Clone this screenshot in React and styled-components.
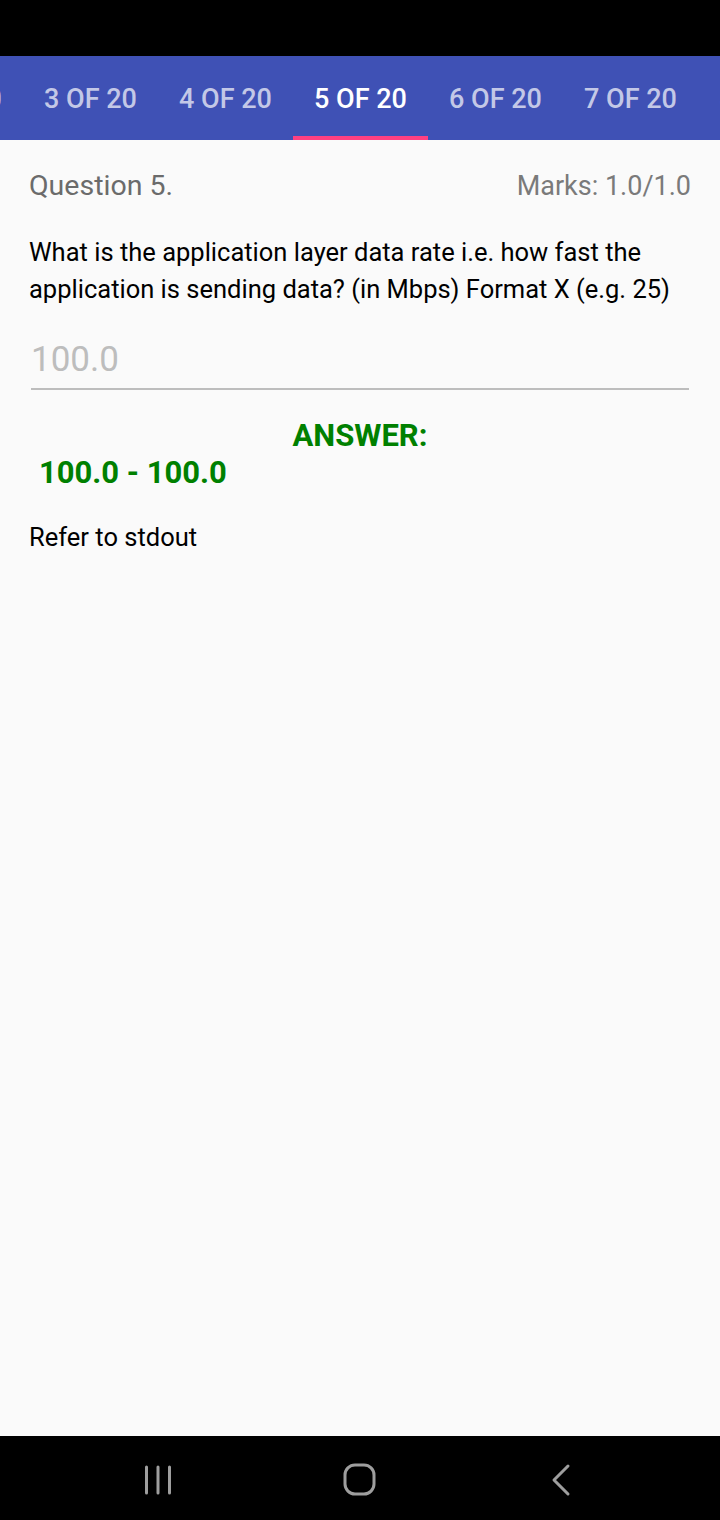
import React from 'react';
import styled, { createGlobalStyle } from 'styled-components';

const GlobalStyle = createGlobalStyle`
	html, body {
		margin: 0;
		padding: 0;
		background: #000;
	}
	body {
		font-family: Roboto, 'Noto Sans', sans-serif;
	}
`;

const tabs = ['2 OF 20', '3 OF 20', '4 OF 20', '5 OF 20', '6 OF 20', '7 OF 20', '8 OF 20'];
const ACTIVE = 3;

const App = () => {
	return (
		<S_SCREEN>
			<GlobalStyle />
			<S_STATUS />
			<S_TABBAR>
				<S_TABTRACK>
					{tabs.map((t, i) => (
						<S_TAB key={t} $active={i === ACTIVE}>
							{t}
						</S_TAB>
					))}
				</S_TABTRACK>
			</S_TABBAR>
			<S_BODY>
				<S_HEADER>
					<S_QTITLE>Question 5.</S_QTITLE>
					<S_MARKS>Marks: 1.0/1.0</S_MARKS>
				</S_HEADER>
				<S_QUESTION>
					What is the application layer data rate i.e. how fast the application is sending
					data? (in Mbps) Format X (e.g. 25)
				</S_QUESTION>
				<S_FIELD>
					<S_INPUT readOnly value="100.0" />
				</S_FIELD>
				<S_ANSWER_LABEL>ANSWER:</S_ANSWER_LABEL>
				<S_ANSWER>100.0 - 100.0</S_ANSWER>
				<S_NOTE>Refer to stdout</S_NOTE>
			</S_BODY>
			<S_NAVBAR>
				<S_NAVBTN>
					<svg width="30" height="30" viewBox="0 0 30 30">
						<g stroke="#9e9e9e" strokeWidth="3" strokeLinecap="round">
							<line x1="2.5" y1="2" x2="2.5" y2="28" />
							<line x1="14" y1="2" x2="14" y2="28" />
							<line x1="25.5" y1="2" x2="25.5" y2="28" />
						</g>
					</svg>
				</S_NAVBTN>
				<S_NAVBTN>
					<svg width="34" height="34" viewBox="0 0 34 34">
						<rect x="2" y="2" width="29" height="29" rx="10" fill="none" stroke="#9e9e9e" strokeWidth="3" />
					</svg>
				</S_NAVBTN>
				<S_NAVBTN>
					<svg width="30" height="34" viewBox="0 0 30 34">
						<polyline
							points="22,3 8,17 22,31"
							fill="none"
							stroke="#9e9e9e"
							strokeWidth="3"
							strokeLinecap="round"
							strokeLinejoin="round"
						/>
					</svg>
				</S_NAVBTN>
			</S_NAVBAR>
		</S_SCREEN>
	);
};

const S_SCREEN = styled.div`
	width: 720px;
	height: 1520px;
	display: flex;
	flex-direction: column;
	background: #fafafa;
	overflow: hidden;
`;

const S_STATUS = styled.div`
	height: 56px;
	background: #000;
	flex-shrink: 0;
`;

const S_TABBAR = styled.div`
	height: 84px;
	background: #3f51b5;
	overflow: hidden;
	flex-shrink: 0;
`;

const S_TABTRACK = styled.div`
	display: flex;
	height: 100%;
	margin-left: -112px;
`;

const S_TAB = styled.div`
	flex: 0 0 135px;
	display: flex;
	align-items: center;
	justify-content: center;
	font-size: 27px;
	font-weight: 500;
	color: ${(p) => (p.$active ? '#ffffff' : 'rgba(255, 255, 255, 0.7)')};
	box-sizing: border-box;
	padding-top: ${(p) => (p.$active ? '6px' : '2px')};
	border-bottom: ${(p) => (p.$active ? '4px solid #ff4081' : 'none')};
	white-space: nowrap;
`;

const S_BODY = styled.div`
	flex: 1;
	padding: 26px 29px 0 29px;
	background: #fafafa;
`;

const S_HEADER = styled.div`
	display: flex;
	justify-content: space-between;
	align-items: baseline;
	line-height: 40px;
`;

const S_QTITLE = styled.div`
	font-size: 28.5px;
	color: #6b6b6b;
`;

const S_MARKS = styled.div`
	font-size: 27px;
	color: #7a7a7a;
`;

const S_QUESTION = styled.div`
	margin-top: 28px;
	font-size: 25.5px;
	line-height: 37px;
	color: #000;
`;

const S_FIELD = styled.div`
	margin: 30px 2px 0 2px;
	border-bottom: 2px solid #bdbdbd;
`;

const S_INPUT = styled.input`
	display: block;
	width: 100%;
	box-sizing: border-box;
	border: none;
	background: transparent;
	outline: none;
	padding: 0 0 8px 0;
	height: 50px;
	font-family: Roboto, sans-serif;
	font-size: 35px;
	color: #bdbdbd;
`;

const S_ANSWER_LABEL = styled.div`
	margin-top: 27px;
	text-align: center;
	font-size: 31px;
	line-height: 37px;
	font-weight: 700;
	color: #008000;
`;

const S_ANSWER = styled.div`
	margin-left: 10px;
	font-size: 31px;
	line-height: 37px;
	font-weight: 700;
	color: #008000;
`;

const S_NOTE = styled.div`
	margin-top: 29px;
	font-size: 25.5px;
	line-height: 34px;
	color: #000;
`;

const S_NAVBAR = styled.div`
	height: 84px;
	flex-shrink: 0;
	background: #000;
	display: grid;
	grid-template-columns: 1fr 1fr 1fr;
	padding: 0 58px;
`;

const S_NAVBTN = styled.div`
	display: flex;
	align-items: center;
	justify-content: center;
	padding-top: 4px;
`;

export default App;
